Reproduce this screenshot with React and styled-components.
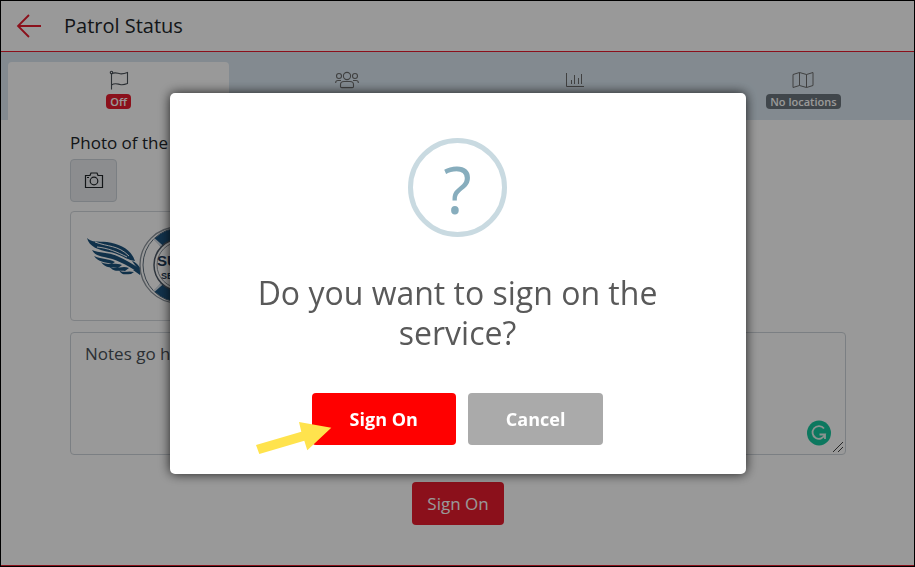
import React from 'react';
import styled, { createGlobalStyle } from 'styled-components';

const GlobalStyle = createGlobalStyle`
* {
  box-sizing: border-box;
}
body {
  margin: 0;
  font-family: "Open Sans", "Noto Sans", sans-serif;
  font-size: 17px;
  line-height: 24px;
  color: #212529;
}
button, textarea {
  font: inherit;
}
`;

const Page = styled.div`
min-height: 100vh;
display: flex;
flex-direction: column;
background-color: white;
border-bottom: 2px solid #e81c2e;
`;
const Header = styled.header`
display: flex;
align-items: center;
gap: 22px;
height: 52px;
padding: 0 16px;
border-bottom: 1px solid #e81c2e;
`;
const BackLink = styled.a`
display: flex;
color: #e81c2e;
`;
const Title = styled.h1`
margin: 0;
font-size: 20px;
font-weight: 400;
line-height: 30px;
`;

// tabs
const Tabs = styled.nav`
display: grid;
grid-template-columns: repeat(4, 1fr);
gap: 7px;
height: 68px;
padding: 10px 1px 0 8px;
background-color: #dae7f1;
`;
const Tab = styled.button`
display: flex;
flex-direction: column;
align-items: center;
gap: 4px;
padding: 8px 0 0;
border: none;
border-radius: 4px 4px 0 0;
color: ${props => props.$active ? "#495057" : "#6c6c6c"};
background-color: ${props => props.$active ? "white" : "transparent"};
cursor: pointer;
`;
const Badge = styled.span`
padding: 0 4px;
border-radius: 4px;
font-size: 11px;
font-weight: 600;
line-height: 15px;
color: white;
background-color: ${props => props.color};
`;

// form
const Form = styled.form`
display: flex;
flex-direction: column;
align-items: flex-start;
padding: 11px 69px 0 70px;
`;
const Label = styled.label`
line-height: 24px;
margin-bottom: 4px;
`;
const CameraButton = styled.button`
display: flex;
align-items: center;
justify-content: center;
width: 47px;
height: 43px;
margin-bottom: 9px;
border: 1px solid #ced4da;
border-radius: 4px;
color: #212529;
background-color: #e9ecef;
`;
const Photo = styled.div`
width: 220px;
height: 110px;
margin-bottom: 11px;
border: 1px solid #d3d7dc;
border-radius: 4px;
overflow: hidden;
`;
const NotesWrapper = styled.div`
position: relative;
display: flex;
width: 100%;
margin-bottom: 27px;
`;
const Notes = styled.textarea`
flex: 1;
height: 123px;
padding: 9px 14px;
border: 1px solid #ced4da;
border-radius: 4px;
color: #495057;
background-color: white;
resize: none;
`;
const Checker = styled.span`
position: absolute;
right: 15px;
bottom: 9px;
display: flex;
`;
const Grip = styled.svg`
position: absolute;
right: 2px;
bottom: 2px;
`;
const SignOn = styled.button`
align-self: center;
height: 43px;
padding: 0 15px;
border: none;
border-radius: 4px;
color: white;
background-color: #e81c2e;
`;

// dialog
const Overlay = styled.div`
position: fixed;
inset: 0;
display: flex;
align-items: center;
justify-content: center;
border: 1px solid black;
background-color: rgba(0, 0, 0, .4);
`;
const Modal = styled.div`
display: flex;
flex-direction: column;
align-items: center;
width: 576px;
max-width: 100%;
padding: 45px 64px 29px;
border-radius: 5px;
background-color: white;
box-shadow: 0 0 12px rgba(0, 0, 0, .8);
`;
const QuestionMark = styled.div`
display: flex;
align-items: center;
justify-content: center;
width: 99px;
height: 99px;
margin-bottom: 36px;
border: 5px solid #c9dae1;
border-radius: 50%;
font-size: 66px;
line-height: 88px;
color: #87adbd;
`;
const Question = styled.h2`
margin: 0 0 40px;
font-size: 32px;
font-weight: 400;
line-height: 40px;
text-align: center;
color: #595959;
`;
const Actions = styled.div`
position: relative;
display: flex;
gap: 12px;
`;
const Button = styled.button`
height: 52px;
padding: 0 38px;
border: none;
border-radius: 4px;
font-weight: 700;
font-size: 18px;
color: white;
background-color: ${props => props.color};
cursor: pointer;
`;
const Pointer = styled.svg`
position: absolute;
left: -56px;
top: 29px;
`;

const BackIcon = () => (
  <svg width="26" height="24" viewBox="0 0 26 24" fill="none" stroke="currentColor" strokeWidth="1.8">
    <path d="M13 1L2 12L13 23M2 12H25" />
  </svg>
);

const FlagIcon = () => (
  <svg width="20" height="20" viewBox="0 0 20 20" fill="none" stroke="currentColor" strokeWidth="1.1">
    <circle cx="2.5" cy="2.5" r="1.2" />
    <path d="M2.5 3.7V19.5M2.5 4C6 1.5 8.5 3.5 11 3.8S16 3.5 18.5 2.5V13.5C16 14.5 13.5 15 11 14.5S6 12.5 2.5 15" />
  </svg>
);

const PeopleIcon = () => (
  <svg width="24" height="20" viewBox="0 0 24 20" fill="none" stroke="currentColor" strokeWidth="1.1">
    <circle cx="12" cy="6" r="3.6" />
    <circle cx="4" cy="6" r="2.5" />
    <circle cx="20" cy="6" r="2.5" />
    <path d="M5.5 16.5V14.5C5.5 12.5 7 11.5 9 11.5H15C17 11.5 18.5 12.5 18.5 14.5V16.5C18.5 17.2 18 17.6 17.3 17.6H6.7C6 17.6 5.5 17.2 5.5 16.5Z" />
    <path d="M.7 13V12.5C.7 11 1.7 10.500 3 10.500H6M23.3 13V12.5C23.3 11 22.3 10.500 21 10.500H18" />
  </svg>
);

const ChartIcon = () => (
  <svg width="20" height="20" viewBox="0 0 20 20" fill="none" stroke="currentColor" strokeWidth="1">
    <path d="M1.5 3V16.5H19M6.5 10V14M9.5 5V14M13.5 8V14M16.5 4V14" />
  </svg>
);

const MapIcon = () => (
  <svg width="22" height="20" viewBox="0 0 22 20" fill="none" stroke="currentColor" strokeWidth="1">
    <path d="M1 4.5L7.5 2.5L14.5 4.5L21 2.5V15.5L14.5 17.5L7.5 15.5L1 17.5ZM7.5 2.5V15.5M14.5 4.5V17.5" />
  </svg>
);

const CameraIcon = () => (
  <svg width="20" height="18" viewBox="0 0 20 18" fill="none" stroke="currentColor" strokeWidth="1.2">
    <path d="M1.5 3.500H6L7 1H13L14 3.500H18.5V15.500H1.5Z" />
    <circle cx="10" cy="9" r="3.8" />
    <path d="M3 5.500H5" />
  </svg>
);

const Emblem = () => (
  <svg width="218" height="108" viewBox="71 212 218 108">
    <g fill="#1c527c">
      <path d="M87 238C92 243 98 241 107 242C120 244 131 249 135 261C126 260 119 253 109 252C99 250 89 247 87 238Z" />
      <path d="M92 250C99 253 108 252 117 256C126 260 133 264 141 270L139 273C126 264 115 259 104 257C98 256 94 254 92 250Z" />
      <path d="M94 256C103 260 108 258 115 262L112 264C105 262 98 262 94 256Z" />
      <path d="M101 262C108 266 113 262 122 265L118 268C112 267 106 269 101 262Z" />
      <path d="M109 266C116 271 121 265 129 268L125 271C119 270 114 273 109 266Z" />
      <path d="M119 270C124 274 127 270 134 272L131 274C126 274 122 276 119 270Z" />
      <path d="M132 261C136 262 139 266 141 269L138 269ZM133 270C136 269 139 271 141 271L140 275Z" />
    </g>
    <path d="M95 242C108 247 118 245 129 256M97 247C108 248 117 252 127 257" fill="none" stroke="white" strokeWidth="1" />
    <circle cx="178" cy="265" r="38" fill="none" stroke="#8b939b" strokeWidth="1.3" />
    <circle cx="180" cy="265" r="37" fill="white" stroke="#5f6e7c" strokeWidth="1" />
    <path d="M154 239A37 37 0 0 1 206 239L198 248A25 25 0 0 0 162 248ZM154 291A37 37 0 0 0 206 291L198 282A25 25 0 0 1 162 282Z" fill="#1c527c" />
    <path d="M154 239L163 247M154 291L163 283" fill="none" stroke="#d5dde5" strokeWidth="2" />
    <circle cx="180" cy="265" r="26" fill="white" stroke="#4d5966" strokeWidth="1.5" />
    <circle cx="180" cy="265" r="23" fill="none" stroke="#8b939b" strokeWidth="1" />
    <g fill="#1d3a56" fontFamily="Liberation Sans, sans-serif" fontWeight="700">
      <text x="157" y="266" fontSize="15">SU</text>
      <text x="161" y="279" fontSize="9">SE</text>
    </g>
  </svg>
);

const CheckerIcon = () => (
  <svg width="24" height="26" viewBox="0 0 24 26">
    <ellipse cx="12" cy="13" rx="12" ry="12.5" fill="#15c89e" />
    <path d="M17 8.5A6.400 6.400 0 1 0 18 14.5H12.5M18 14.5V19" fill="none" stroke="#e8f5f1" strokeWidth="1.8" />
  </svg>
);

const App = () => {
  return (
    <>
      <GlobalStyle />
      <Page>
        <Header>
          <BackLink href="#" aria-label="Back"><BackIcon /></BackLink>
          <Title>Patrol Status</Title>
        </Header>
        <Tabs>
          <Tab $active><FlagIcon /><Badge color="#e81c2e">Off</Badge></Tab>
          <Tab aria-label="Crew"><PeopleIcon /></Tab>
          <Tab aria-label="Statistics"><ChartIcon /></Tab>
          <Tab><MapIcon /><Badge color="#6c757d">No locations</Badge></Tab>
        </Tabs>
        <Form>
          <Label htmlFor="photo">Photo of the</Label>
          <CameraButton id="photo" type="button"><CameraIcon /></CameraButton>
          <Photo><Emblem /></Photo>
          <NotesWrapper>
            <Notes aria-label="Notes" defaultValue="Notes go here" />
            <Checker><CheckerIcon /></Checker>
            <Grip width="12" height="12" viewBox="0 0 12 12" stroke="#444444">
              <path d="M1 11L11 1M6 11L11 6" />
            </Grip>
          </NotesWrapper>
          <SignOn type="button">Sign On</SignOn>
        </Form>
      </Page>
      <Overlay>
        <Modal role="dialog" aria-modal="true" aria-labelledby="question">
          <QuestionMark>?</QuestionMark>
          <Question id="question">Do you want to sign on the service?</Question>
          <Actions>
            <Button color="#ff0000">Sign On</Button>
            <Button color="#aaaaaa">Cancel</Button>
            <Pointer width="76" height="34" viewBox="256 422 76 34">
              <path d="M256 445L301.3 431.7L299 422L331.3 427.7L307.3 450.3L304.3 440.7L259.3 454Z" fill="#ffe34d" />
            </Pointer>
          </Actions>
        </Modal>
      </Overlay>
    </>
  )
}

export default App
